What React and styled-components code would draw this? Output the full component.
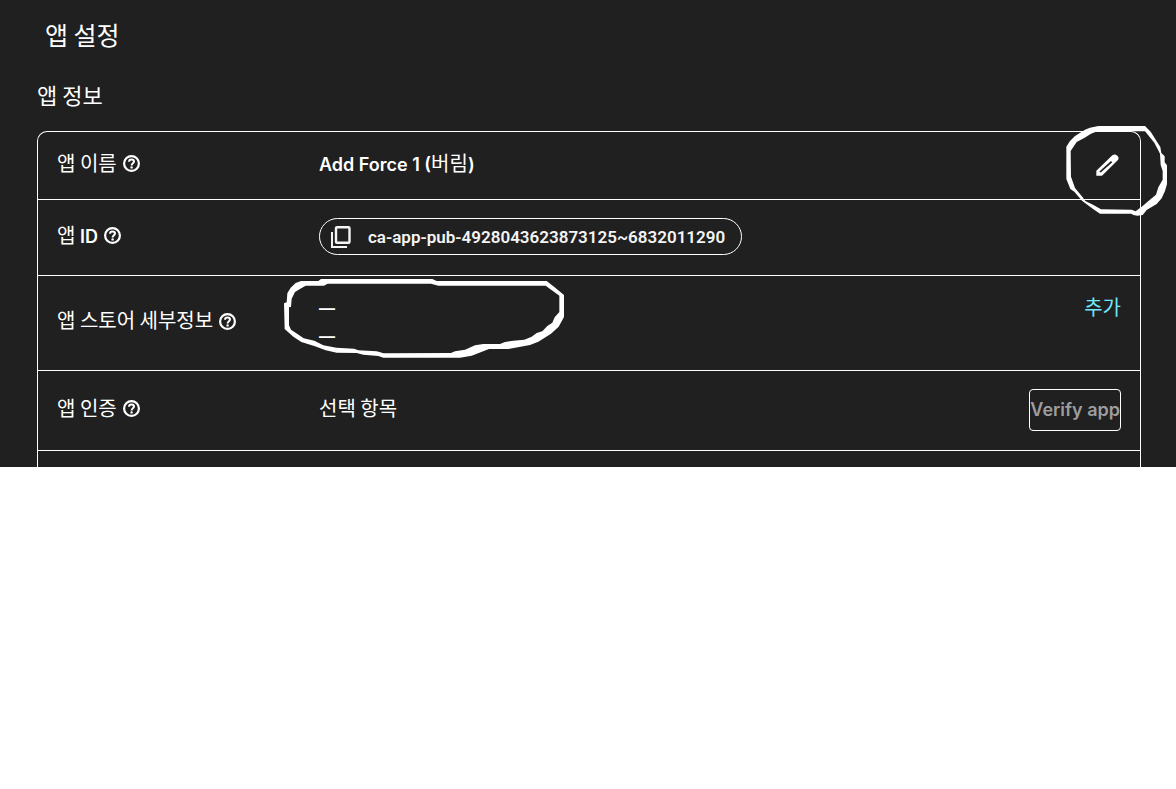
import styled, { createGlobalStyle } from 'styled-components'

const GlobalStyle = createGlobalStyle`
    * {
        box-sizing: border-box;
    }

    body {
        background: #ffffff;
        margin: 0;
    }
`

const Page = styled.main`
    background: #202020;
    color: #ffffff;
    font-family: Inter, "Noto Sans CJK KR", sans-serif;
    font-size: 18px;
    font-weight: 600;
    line-height: 28px;
    overflow: hidden;
    padding: 16px 35px 0 37px;
`

const Title = styled.h1`
    font-family: "Noto Sans CJK KR", sans-serif;
    font-size: 25px;
    font-weight: 400;
    line-height: 36px;
    margin: 0;
    padding-left: 8px;
`

const Subtitle = styled.h2`
    font-family: "Noto Sans CJK KR", sans-serif;
    font-size: 22px;
    font-weight: 400;
    line-height: 36px;
    margin: 24px 0 19px;
`

const Card = styled.section`
    border: 1px solid #ffffff;
    border-bottom: 0;
    border-radius: 10px 10px 0 0;
`

const Row = styled.div`
    align-items: center;
    border-bottom: 1px solid #ffffff;
    display: grid;
    grid-template-columns: 262px 1fr auto;
    min-height: ${ ( { $height } ) => $height }px;
    padding: 0 19px 2px;
`

const NextRow = styled.div`
    height: 16px;
`

const Label = styled.div`
    align-items: center;
    display: flex;
    gap: 6px;
    padding-bottom: 2px;
`

const Korean = styled.span`
    font-family: "Noto Sans CJK KR", sans-serif;
    font-size: 20px;
    font-weight: 400;
`

const HelpButton = styled.button`
    background: none;
    border: 0;
    color: inherit;
    display: flex;
    padding: 0;
`

const Value = styled.div`
    padding-bottom: ${ ( { $raised } ) => $raised ? 2 : 0 }px;
    position: relative;
`

const Dash = styled.div`
    font-size: 16px;
    line-height: 28px;
`

const IdChip = styled.button`
    align-items: center;
    background: none;
    border: 1px solid #ffffff;
    border-radius: 19px;
    color: #f4f4f4;
    display: inline-flex;
    font: 600 17px/20px Roboto, sans-serif;
    gap: 15px;
    height: 37px;
    padding: 0 16px 0 11px;
    vertical-align: middle;
`

const EditButton = styled.button`
    background: none;
    border: 0;
    color: #ffffff;
    display: flex;
    padding: 0 2px;
    position: relative;
`

const AddButton = styled.button`
    align-self: start;
    background: none;
    border: 0;
    color: #6fe6fa;
    font: 400 20px/28px "Noto Sans CJK KR", sans-serif;
    padding: 17px 0 0;
`

const VerifyButton = styled.button`
    background: none;
    border: 1px solid #ffffff;
    border-radius: 4px;
    color: #9d9d9d;
    font: 600 18px/40px Inter, sans-serif;
    padding: 0;
    white-space: nowrap;
`

const Marker = styled.svg`
    fill: #ffffff;
    fill-rule: evenodd;
    left: ${ ( { $left } ) => $left }px;
    overflow: visible;
    pointer-events: none;
    position: absolute;
    top: ${ ( { $top } ) => $top }px;
`

function HelpIcon() {
    return <svg width="17" height="17" viewBox="0 0 17 17" fill="none" stroke="currentColor" strokeWidth="2.2" aria-hidden="true">
        <circle cx="8.5" cy="8.5" r="7.4" />
        <path d="M6 6.8C6 5.3 7 4.4 8.5 4.4S11 5.3 11 6.6C11 8.2 8.6 8.3 8.6 10.4" strokeWidth="2" />
        <circle cx="8.6" cy="12.4" r="1.2" fill="currentColor" stroke="none" />
    </svg>
}

function CopyIcon() {
    return <svg width="22" height="22" viewBox="0 0 22 22" fill="none" stroke="currentColor" strokeWidth="2" aria-hidden="true">
        <rect x="5" y="1.2" width="13.5" height="15.6" rx="1" strokeWidth="2.4" />
        <path d="M1 6v15h15" />
    </svg>
}

function PencilIcon() {
    return <svg width="23" height="22" viewBox="0 0 69 66" aria-hidden="true">
        <path fill="currentColor" fillRule="evenodd" d="M1 65V50L49 4Q56-1 64 5Q71 11 65 19L18 65ZM11 55H15L49 25L45 21L11 52Z" />
    </svg>
}

function EditMarker() {
    return <Marker $left={ -44 } $top={ -39 } width="126" height="110" viewBox="0 0 378 330" aria-hidden="true">
        <path d="M49 95L60 78L75 63L105 44L120 38L145 33L285 33L302 50L331 96L334 114L344 124L344 142L351 151L351 207L345 228L335 250L320 267L290 285L278 300L262 302L250 300L244 296L150 296L126 280L96 257L73 230L61 222L49 192ZM62 108L63 185L75 219L98 247L106 258L129 269L153 283L245 284L257 289L278 273L298 256L318 239L325 217L338 194L338 168L332 150L330 116L313 83L285 49L142 49L123 56L104 68L80 81Z" />
    </Marker>
}

function StoreMarker() {
    return <Marker $left={ -44 } $top={ -24 } width="300" height="100" viewBox="0 0 900 300" aria-hidden="true">
        <path d="M27 100L35 97L37 70L47 53L62 39L78 33L130 33L138 27L472 27L485 33L815 33L838 51L867 75L867 141L851 170L828 191L790 215L765 225L700 237L642 237L590 257L555 263L325 263L310 258L265 254L245 249L185 248L152 241L120 229L79 216L55 200L29 177ZM42 112L42 166L48 179L64 190L86 205L118 212L145 226L184 233L237 236L250 241L305 244L326 250L528 249L540 244L570 239L600 226L625 222L675 222L690 216L715 212L748 209L770 200L785 189L802 184L817 168L832 158L839 142L853 126L853 77L812 47L490 47L468 41L158 41L147 47L92 47L76 56L60 66L50 86L48 111Z" />
    </Marker>
}

/**
 * Row label with its help button.
 * @param {Object} props
 * @returns {JSX.Element}
 */
function RowLabel( { children, suffix } ) {
    return <Label>
        <span><Korean>{ children }</Korean>{ suffix ? ` ${ suffix }` : null }</span>
        <HelpButton type="button" aria-label="도움말"><HelpIcon /></HelpButton>
    </Label>
}

export default function App() {

    return <>
        <GlobalStyle />
        <Page>
            <Title>앱 설정</Title>
            <Subtitle>앱 정보</Subtitle>
            <Card>
                <Row $height={ 68 }>
                    <RowLabel>앱 이름</RowLabel>
                    <Value $raised>Add Force 1 (<Korean>버림</Korean>)</Value>
                    <EditButton type="button" aria-label="수정">
                        <PencilIcon />
                        <EditMarker />
                    </EditButton>
                </Row>
                <Row $height={ 76 }>
                    <RowLabel suffix="ID">앱</RowLabel>
                    <Value>
                        <IdChip type="button"><CopyIcon />ca-app-pub-4928043623873125~6832011290</IdChip>
                    </Value>
                </Row>
                <Row $height={ 95 }>
                    <RowLabel>앱 스토어 세부정보</RowLabel>
                    <Value>
                        <Dash>—</Dash>
                        <Dash>—</Dash>
                        <StoreMarker />
                    </Value>
                    <AddButton type="button">추가</AddButton>
                </Row>
                <Row $height={ 80 }>
                    <RowLabel>앱 인증</RowLabel>
                    <Value $raised><Korean>선택 항목</Korean></Value>
                    <VerifyButton type="button" disabled>Verify app</VerifyButton>
                </Row>
                <NextRow />
            </Card>
        </Page>
    </>

}
